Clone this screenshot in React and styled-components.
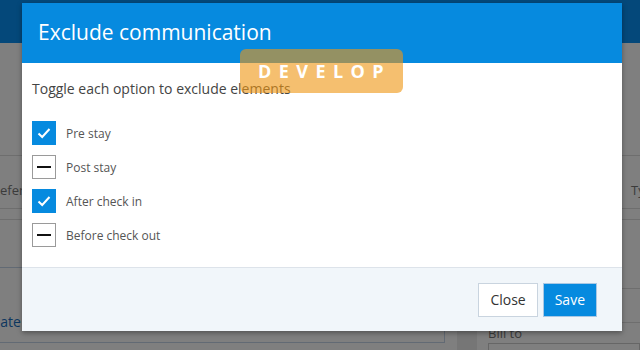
import React, { useState } from 'react';
import styled, { createGlobalStyle } from 'styled-components';

const GlobalStyle = createGlobalStyle`
  html, body {
    margin: 0;
    padding: 0;
    background: #ffffff;
    font-family: 'Open Sans', 'Liberation Sans', sans-serif;
  }
`;

const StyledPage = styled.div`
  position: relative;
  width: 640px;
  height: 350px;
  overflow: hidden;
  background: #ffffff;
`;

const StyledNavBar = styled.div`
  height: 43px;
  background: #0890f4;
`;

const StyledContent = styled.div`
  margin-left: -27px;
  display: flex;
  flex-direction: column;
`;

const StyledToolbar = styled.div`
  height: 112px;
  border-bottom: 1px solid #dcdcdc;
`;

const StyledTableHead = styled.div`
  display: flex;
  height: 52px;
  border-bottom: 1px solid #dcdcdc;
`;

const StyledHeadCell = styled.div`
  flex-shrink: 0;
  box-sizing: border-box;
  width: ${({ width }) => (width ? `${width}px` : 'auto')};
  padding: 24px 0 0 ${({ indent }) => indent || 0}px;
  font-size: 13px;
  line-height: 20px;
  color: #777777;
  white-space: nowrap;
`;

const StyledFilterRow = styled.div`
  height: 10px;
  border-bottom: 1px solid #dcdcdc;
`;

const StyledSplit = styled.div`
  display: flex;
`;

const StyledMain = styled.div`
  width: 472px;
  flex-shrink: 0;
  padding-top: 47px;
`;

const StyledBox = styled.div`
  height: 76px;
  border: 1px solid #c4d4e8;
  border-left: none;
  display: flex;
  align-items: flex-end;
  padding-bottom: 11px;
  box-sizing: border-box;
`;

const StyledLink = styled.a`
  font-size: 14px;
  color: #1a6fc0;
  text-decoration: none;
`;

const StyledGutter = styled.div`
  width: 12px;
  flex-shrink: 0;
`;

const StyledDarkColumn = styled.div`
  width: 20px;
  flex-shrink: 0;
  height: 200px;
  background: #ededed;
`;

const StyledSide = styled.div`
  flex: 1;
  display: flex;
  flex-direction: column;
  padding-left: 11px;
`;

const StyledSideRow = styled.div`
  height: ${({ h }) => h}px;
  border-bottom: 1px solid #dcdcdc;
  margin-left: -11px;
`;

const StyledLabel = styled.div`
  font-size: 13px;
  line-height: 20px;
  color: #777777;
`;

const StyledInput = styled.div`
  height: 30px;
  border: 1px solid #cccccc;
`;

const StyledBackdrop = styled.div`
  position: absolute;
  inset: 0;
  background: rgba(0, 0, 0, 0.5);
  display: flex;
  justify-content: center;
  align-items: flex-start;
  padding: 3px 0 0 4px;
`;

const StyledModal = styled.div`
  width: 600px;
  background: #ffffff;
  box-shadow: 0 2px 5px rgba(0, 0, 0, 0.35);
  display: flex;
  flex-direction: column;
`;

const StyledModalHeader = styled.div`
  height: 60px;
  background: #068adf;
  display: flex;
  align-items: center;
  padding: 0 16px;
  box-sizing: border-box;
  > h2 {
    margin: 0;
    font-size: 21px;
    font-weight: 400;
    color: #ffffff;
    margin-top: -2px;
  }
`;

const StyledModalBody = styled.div`
  height: 204px;
  padding: 16px 10px 0;
  box-sizing: border-box;
  > p {
    margin: 0 0 22px;
    font-size: 14px;
    line-height: 20px;
    color: #444444;
  }
`;

const StyledOptions = styled.div`
  display: flex;
  flex-direction: column;
  gap: 10px;
`;

const StyledOption = styled.label`
  display: flex;
  align-items: center;
  gap: 10px;
  font-size: 12px;
  color: #555555;
  cursor: pointer;
`;

const StyledCheckbox = styled.span`
  width: 24px;
  height: 24px;
  box-sizing: border-box;
  display: flex;
  align-items: center;
  justify-content: center;
  background: ${({ checked }) => (checked ? '#068adf' : '#ffffff')};
  border: 1px solid ${({ checked }) => (checked ? '#068adf' : '#9a9a9a')};
`;

const StyledDash = styled.span`
  width: 14px;
  height: 2px;
  background: #111111;
`;

const StyledModalFooter = styled.div`
  height: 64px;
  border-top: 1px solid #dde3ea;
  background: #f1f6fa;
  display: flex;
  justify-content: flex-end;
  align-items: center;
  gap: 5px;
  padding: 0 25px 0 0;
  box-sizing: border-box;
`;

const StyledButton = styled.button`
  height: 34px;
  padding: 0 ${({ primary }) => (primary ? 11 : 11)}px;
  font-family: 'Open Sans', 'Liberation Sans', sans-serif;
  font-size: 14px;
  color: ${({ primary }) => (primary ? '#ffffff' : '#333333')};
  background: ${({ primary }) => (primary ? '#068adf' : '#ffffff')};
  border: 1px solid ${({ primary }) => (primary ? '#a9c8e4' : '#c9d4df')};
  cursor: pointer;
`;

const StyledBadge = styled.div`
  position: absolute;
  left: 240px;
  top: 49px;
  width: 163px;
  height: 44px;
  border-radius: 6px;
  background: rgba(239, 150, 19, 0.61);
  display: flex;
  align-items: center;
  justify-content: center;
  padding-left: 6px;
  box-sizing: border-box;
  font-size: 18px;
  font-weight: 700;
  letter-spacing: 7.4px;
  color: #ffffff;
`;

const options = [
  { label: 'Pre stay', checked: true },
  { label: 'Post stay', checked: false },
  { label: 'After check in', checked: true },
  { label: 'Before check out', checked: false },
];

function CheckMark() {
  return (
    <svg width="16" height="16" viewBox="0 0 16 16">
      <polyline
        points="2.5,8.5 6.2,12 13.5,4"
        fill="none"
        stroke="#ffffff"
        strokeWidth="2"
      />
    </svg>
  );
}

function App() {
  const [state, setState] = useState(options);

  const toggle = (index) => {
    setState(state.map((o, i) => (i === index ? { ...o, checked: !o.checked } : o)));
  };

  return (
    <>
      <GlobalStyle />
      <StyledPage>
        <StyledNavBar />
        <StyledContent>
          <StyledToolbar />
          <StyledTableHead>
            <StyledHeadCell width={658} indent={19}>
              Reference
            </StyledHeadCell>
            <StyledHeadCell>Type</StyledHeadCell>
          </StyledTableHead>
          <StyledFilterRow />
          <StyledSplit>
            <StyledMain>
              <StyledBox>
                <StyledLink href="#">Update</StyledLink>
              </StyledBox>
            </StyledMain>
            <StyledGutter />
            <StyledDarkColumn />
            <StyledSide>
              <StyledSideRow h={68} />
              <StyledSideRow h={33} />
              <StyledLabel>Bill to</StyledLabel>
              <StyledInput />
            </StyledSide>
          </StyledSplit>
        </StyledContent>

        <StyledBackdrop>
          <StyledModal>
            <StyledModalHeader>
              <h2>Exclude communication</h2>
            </StyledModalHeader>
            <StyledModalBody>
              <p>Toggle each option to exclude elements</p>
              <StyledOptions>
                {state.map((o, i) => (
                  <StyledOption key={o.label} onClick={() => toggle(i)}>
                    <StyledCheckbox checked={o.checked}>
                      {o.checked ? <CheckMark /> : <StyledDash />}
                    </StyledCheckbox>
                    {o.label}
                  </StyledOption>
                ))}
              </StyledOptions>
            </StyledModalBody>
            <StyledModalFooter>
              <StyledButton>Close</StyledButton>
              <StyledButton primary>Save</StyledButton>
            </StyledModalFooter>
          </StyledModal>
        </StyledBackdrop>

        <StyledBadge>DEVELOP</StyledBadge>
      </StyledPage>
    </>
  );
}

export default App;
